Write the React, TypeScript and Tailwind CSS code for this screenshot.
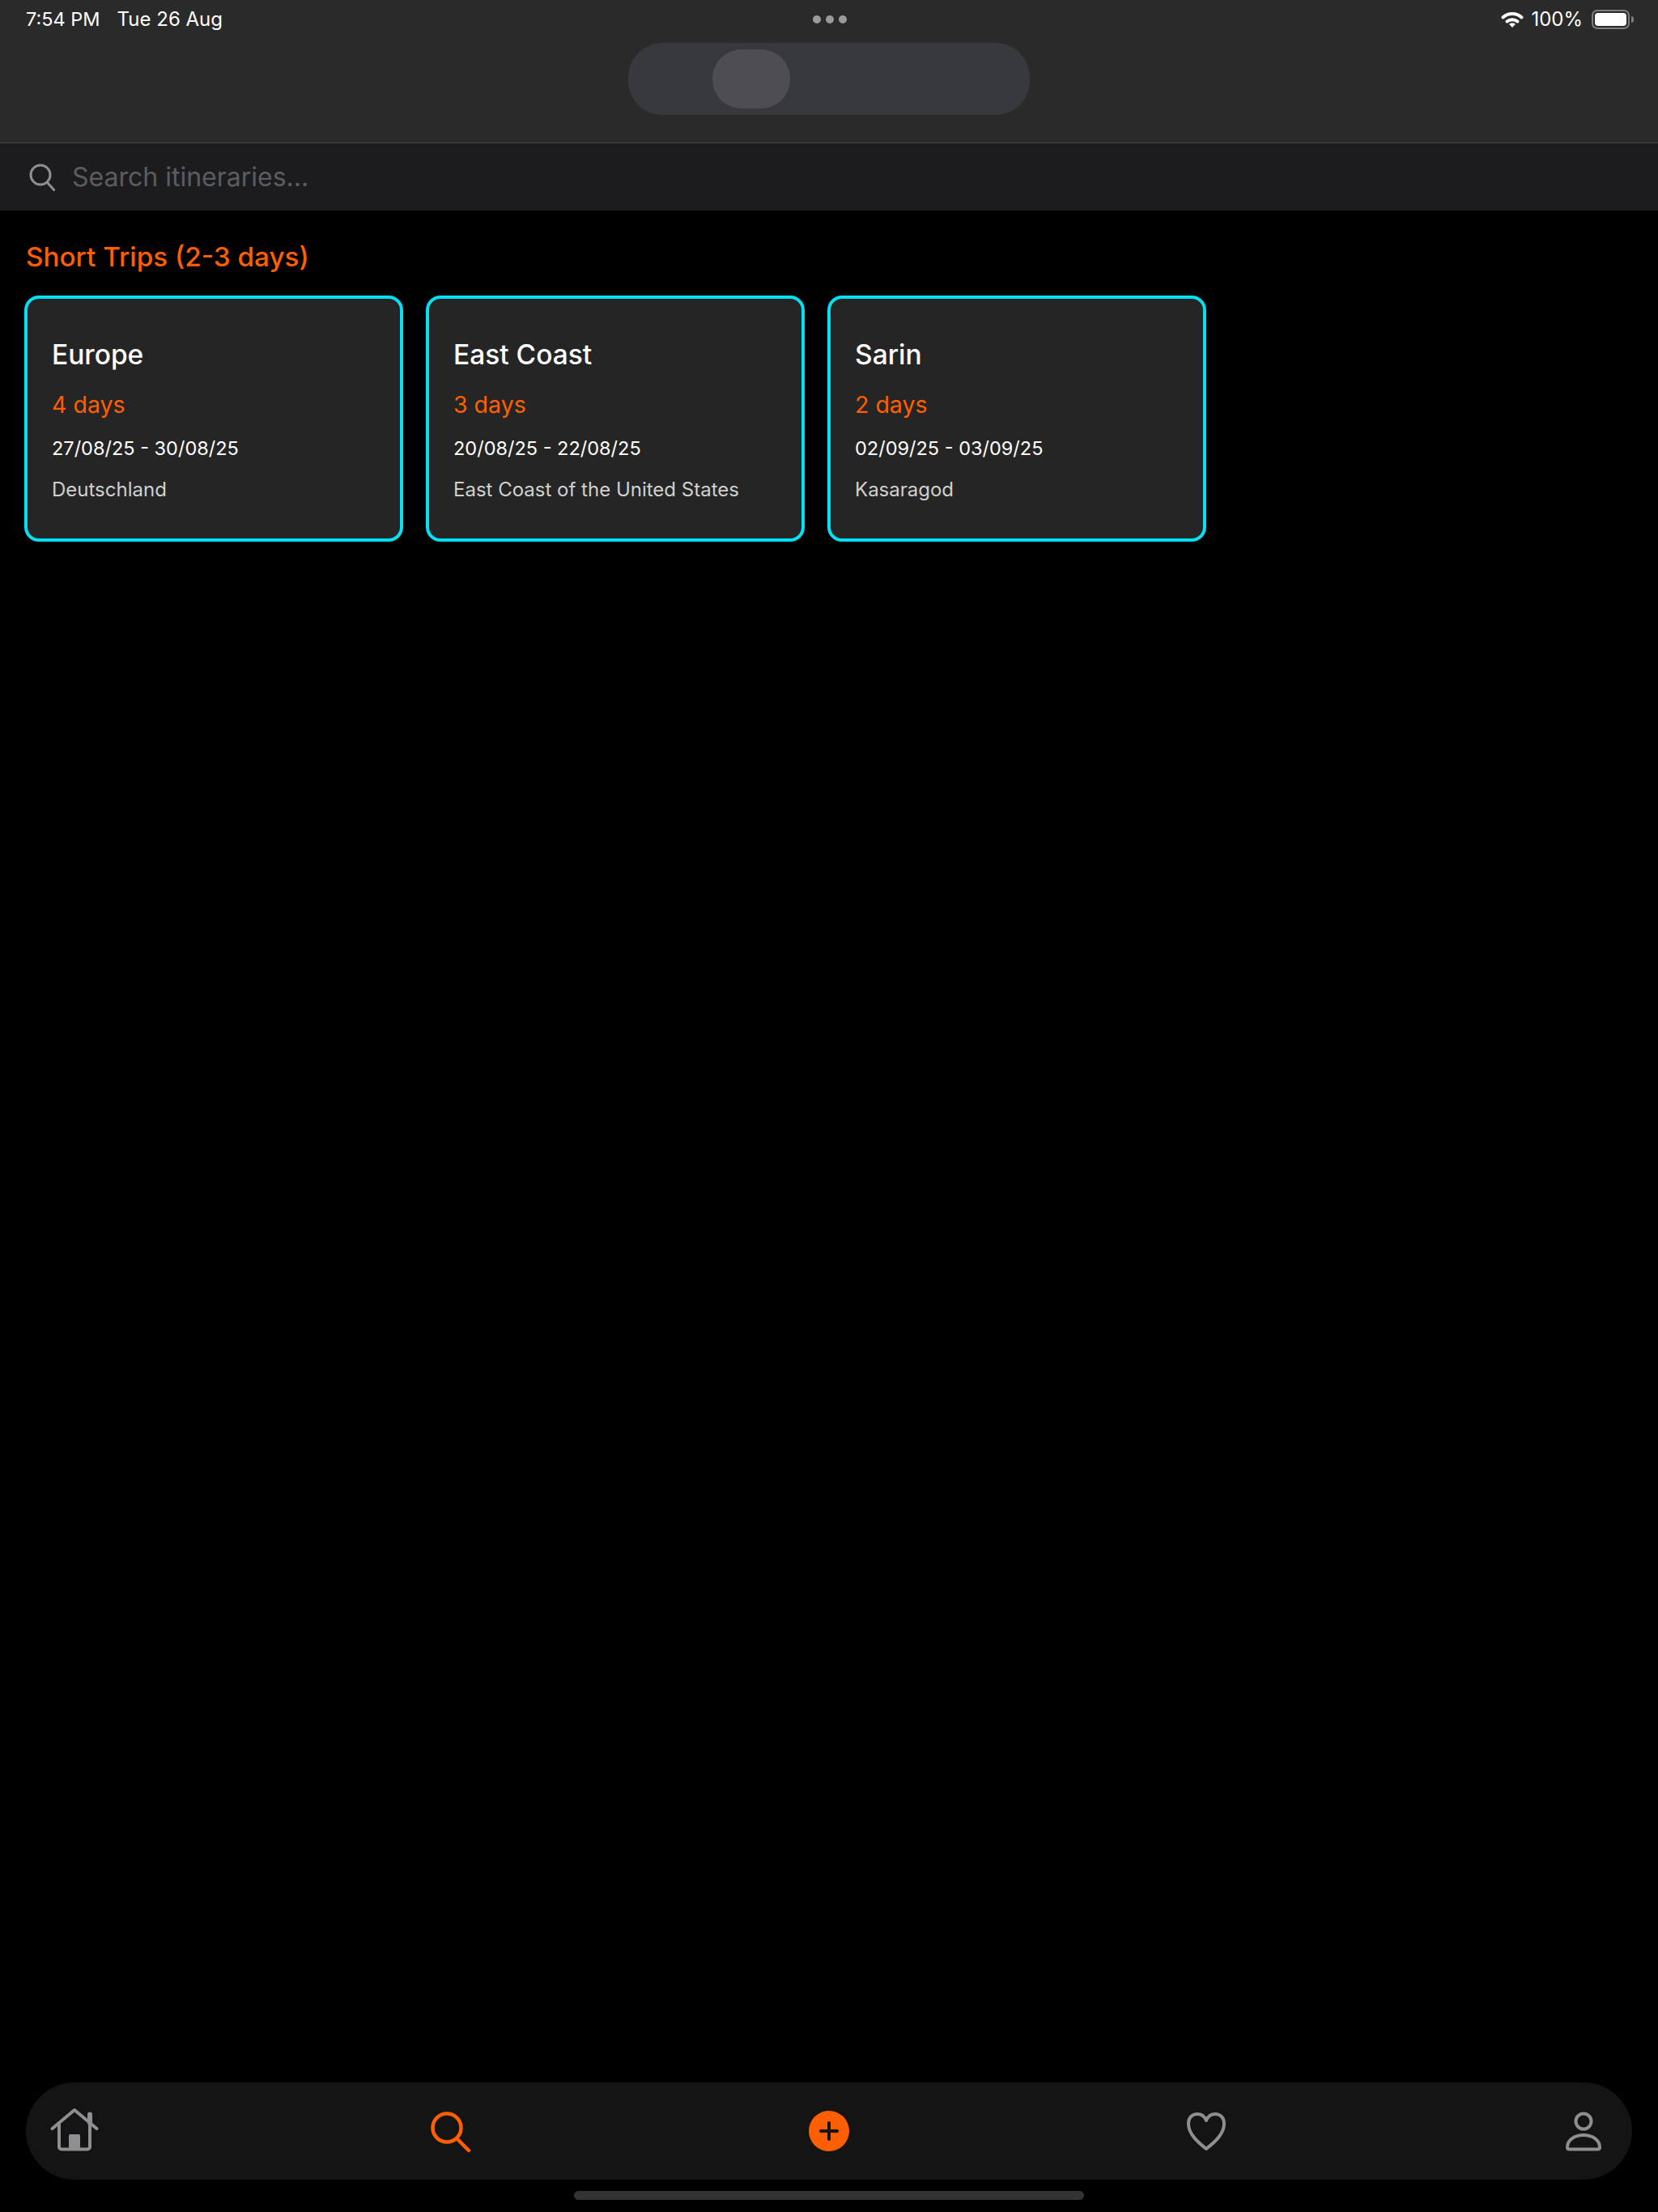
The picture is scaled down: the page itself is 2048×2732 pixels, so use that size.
const trips = [
  { name: "Europe", days: "4 days", dates: "27/08/25 - 30/08/25", place: "Deutschland" },
  { name: "East Coast", days: "3 days", dates: "20/08/25 - 22/08/25", place: "East Coast of the United States" },
  { name: "Sarin", days: "2 days", dates: "02/09/25 - 03/09/25", place: "Kasaragod" },
];

function StatusBar() {
  return (
    <div className="grid h-[48px] grid-cols-3 items-center pl-[32px] pr-[30px] text-white">
      <div className="flex items-center gap-[21px]">
        <span className="text-[23.5px]">7:54 PM</span>
        <span className="text-[24px]">Tue 26 Aug</span>
      </div>
      <div className="flex justify-center gap-[6px]">
        <span className="h-[10px] w-[10px] rounded-full bg-[#9b9b9b]" />
        <span className="h-[10px] w-[10px] rounded-full bg-[#9b9b9b]" />
        <span className="h-[10px] w-[10px] rounded-full bg-[#9b9b9b]" />
      </div>
      <div className="flex items-center justify-end gap-[9px]">
        <svg width="28" height="20" viewBox="0 0 28 20" fill="none" stroke="white" strokeWidth="4" strokeLinecap="round">
          <path d="M2.500 7.500C9 1.500 19 1.500 25.500 7.500" />
          <path d="M7.500 12.500C11 9.500 17 9.500 20.500 12.500" />
          <path d="M14 20l-4-4.200c2.200-1.800 5.800-1.800 8 0z" fill="white" stroke="none" />
        </svg>
        <span className="text-[24px]">100%</span>
        <div className="flex items-center gap-[2px] pl-[2px]">
          <div className="flex h-[24px] w-[47px] rounded-[7px] border-2 border-[#7d7d7d] p-[2px]">
            <div className="flex-1 rounded-[4px] bg-white" />
          </div>
          <div className="h-[8px] w-[3px] rounded-r-full bg-[#7d7d7d]" />
        </div>
      </div>
    </div>
  );
}

function TripCard({ name, days, dates, place }: (typeof trips)[number]) {
  return (
    <div className="flex h-[304px] w-[468px] flex-col rounded-[18px] border-4 border-[#00e1f5] bg-[#252525] px-[30px] pt-[46px]">
      <div className="text-[33.5px] font-medium leading-[46px] text-white">{name}</div>
      <div className="mt-[22px] text-[28.5px] leading-[34px] text-[#ff5f00]">{days}</div>
      <div className="mt-[20px] text-[23.5px] leading-[34px] text-white">{dates}</div>
      <div className="mt-[17px] text-[24px] leading-[34px] text-[#d0d0d0]">{place}</div>
    </div>
  );
}

function BottomNav() {
  return (
    <nav className="mx-[32px] flex h-[120px] items-center justify-between rounded-[60px] bg-[#141414] px-[30px]">
      <svg width="60" height="54" viewBox="0 0 60 54" fill="none" stroke="#8e8e93" strokeWidth="4" strokeLinecap="round" strokeLinejoin="round" className="mb-[2px]">
        <path d="M2.500 25L30 2l27.500 23" />
        <path d="M11 20v27.500a3 3 0 0 0 3 3h32a3 3 0 0 0 3-3V20" />
        <path d="M49 7.500V18" strokeWidth="6" />
        <rect x="23" y="32" width="14" height="19" rx="1.500" fill="#8e8e93" stroke="none" />
      </svg>
      <svg width="60" height="54" viewBox="0 0 60 54" fill="none" stroke="#ff5f00" strokeWidth="4.500" strokeLinecap="round">
        <circle cx="24" cy="23" r="17.500" />
        <path d="M37 37l14 14" />
      </svg>
      <div className="mx-[5px] flex h-[50px] w-[50px] items-center justify-center rounded-full bg-[#ff5f00]">
        <svg width="24" height="24" viewBox="0 0 24 24" stroke="#141414" strokeWidth="4" strokeLinecap="round">
          <path d="M12 2v20M2 12h20" />
        </svg>
      </div>
      <svg width="60" height="54" viewBox="0 0 60 54" fill="none" stroke="#8e8e93" strokeWidth="4" strokeLinejoin="round">
        <path d="M30 49C20 41 8 31 8 18 8 10 13 6 19 6c5 0 9 3 11 8 2-5 6-8 11-8 6 0 11 4 11 12 0 13-12 23-22 31z" />
      </svg>
      <svg width="60" height="54" viewBox="0 0 60 54" fill="none" stroke="#8e8e93" strokeWidth="4" strokeLinejoin="round">
        <circle cx="30" cy="15" r="9.500" />
        <path d="M10 47c0-9 9-15 20-15s20 6 20 15c0 1.500-1 2.500-2.500 2.500h-35C11 49.500 10 48.500 10 47z" />
      </svg>
    </nav>
  );
}

export default function App() {
  return (
    <div className="flex min-h-[2732px] w-[2048px] flex-col bg-black font-[Inter,sans-serif]">
      <header className="h-[177px] border-b border-[#444446] bg-[#2a2a2a]">
        <StatusBar />
        <div className="mx-auto mt-[5px] flex h-[89px] w-[496px] items-center rounded-[42px] bg-[#38393c] pl-[104px]">
          <div className="h-[73px] w-[96px] rounded-[36px] bg-[#4e4e52]" />
        </div>
      </header>

      <div className="flex h-[83px] items-center gap-[21px] bg-[#1c1c1e] pl-[36px]">
        <svg width="32" height="34" viewBox="0 0 32 34" fill="none" stroke="#8e8e93" strokeWidth="3" strokeLinecap="round">
          <circle cx="14" cy="14" r="12" />
          <path d="M22.500 23.500L31 33" />
        </svg>
        <span className="text-[32px] text-[#5c5c5f]">Search itineraries...</span>
      </div>

      <main className="flex-1 px-[30px] pt-[34px]">
        <h2 className="pl-[2px] text-[33.25px] font-medium leading-[46px] text-[#ff5f00]">Short Trips (2-3 days)</h2>
        <div className="mt-[25px] flex gap-[28px]">
          {trips.map((trip) => (
            <TripCard key={trip.name} {...trip} />
          ))}
        </div>
      </main>

      <BottomNav />
      <div className="flex h-[40px] justify-center pt-[14px]">
        <div className="h-[11px] w-[630px] rounded-full bg-[#333333]" />
      </div>
    </div>
  );
}
